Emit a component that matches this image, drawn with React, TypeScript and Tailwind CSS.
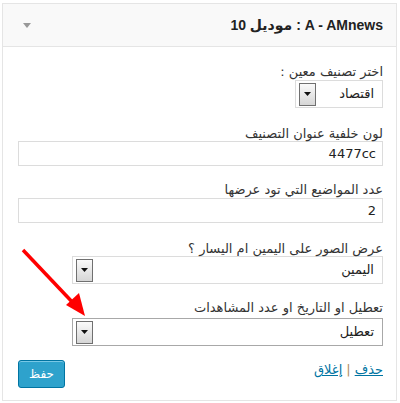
import React from "react";

const font = { fontFamily: '"DejaVu Sans", Tahoma, sans-serif' };
const titleFont = { fontFamily: '"Liberation Sans", "DejaVu Sans", sans-serif' };

function DropButton() {
  return (
    <span className="flex h-[23px] w-[17px] shrink-0 items-center justify-center border border-[#707070] bg-gradient-to-b from-[#fafafa] to-[#d6d6d6]">
      <svg width="7" height="4" viewBox="0 0 7 4">
        <path d="M0 0h7L3.5 4z" fill="#111" />
      </svg>
    </span>
  );
}

function FakeSelect({ value, className }: { value: string; className: string }) {
  return (
    <div
      dir="ltr"
      className={`flex h-[28px] items-center border bg-white pl-[3px] pr-[8px] ${className}`}
    >
      <DropButton />
      <span className="flex-1 text-right text-[13px] text-[#222]">{value}</span>
    </div>
  );
}

function TextBox({ value }: { value: string }) {
  return (
    <div className="flex h-[25px] items-center border border-[#dcdcdc] bg-white px-[6px] text-[13px] text-[#222]">
      {value}
    </div>
  );
}

export default function App() {
  return (
    <div className="relative h-[403px] w-[400px] bg-white" style={font}>
      <div className="absolute left-[2px] top-[3px] h-[398px] w-[395px] border border-[#e5e5e5] bg-white">
        {/* widget title bar */}
        <div className="flex h-[43px] items-center justify-between border-b border-[#e5e5e5] bg-[#f9f9f9] pl-[20px] pr-[13px]">
          <svg width="8" height="5" viewBox="0 0 8 5">
            <path d="M0 0h8L4 5z" fill="#999" />
          </svg>
          <span dir="rtl" className="text-[14px] font-bold text-[#222]" style={titleFont}>
            A - AMnews : موديل 10
          </span>
        </div>

        <div dir="rtl" className="pl-[15px] pr-[13px] text-[13px] leading-[14px] text-[#333]">
          <div className="pt-[18px]">
            <div className="mb-[1px]">اختر تصنيف معين :</div>
            <FakeSelect value="اقتصاد" className="w-[88px] border-[#dcdcdc]" />
          </div>

          <div className="mt-[19px]">
            <div>لون خلفية عنوان التصنيف</div>
            <TextBox value="4477cc" />
          </div>

          <div className="mt-[17px]">
            <div className="mb-[1px]">عدد المواضيع التي تود عرضها</div>
            <TextBox value="2" />
          </div>

          <div className="mt-[19px]">
            <div>عرض الصور على اليمين ام اليسار ؟</div>
            <FakeSelect value="اليمين" className="w-[311px] border-[#dcdcdc]" />
          </div>

          <div className="mt-[17px]">
            <div className="mb-[3px]">تعطيل او التاريخ او عدد المشاهدات</div>
            <FakeSelect value="تعطيل" className="w-[311px] border-[#a8a8a8]" />
          </div>

          <div className="mt-[14px] flex items-start justify-between">
            <div className="pt-[2px] text-[13px] leading-[16px]">
              <a href="#" className="text-[#0074a2] underline">حذف</a>
              <span className="mx-[4px] text-[#b08a5a]">|</span>
              <a href="#" className="text-[#0074a2] underline">إغلاق</a>
            </div>
            <button className="h-[28px] w-[47px] rounded-[3px] border border-[#0074a2] bg-[#2ea2cc] text-[12px] text-white shadow-[inset_0_1px_0_#78c8e6]">
              حفظ
            </button>
          </div>
        </div>
      </div>

      {/* annotation arrow */}
      <svg className="pointer-events-none absolute left-0 top-0" width="400" height="403">
        <line x1="23" y1="250" x2="76" y2="306" stroke="#ff0000" strokeWidth="3.5" />
        <path d="M85 316 L66 305 L79 293 Z" fill="#ff0000" />
      </svg>
    </div>
  );
}
